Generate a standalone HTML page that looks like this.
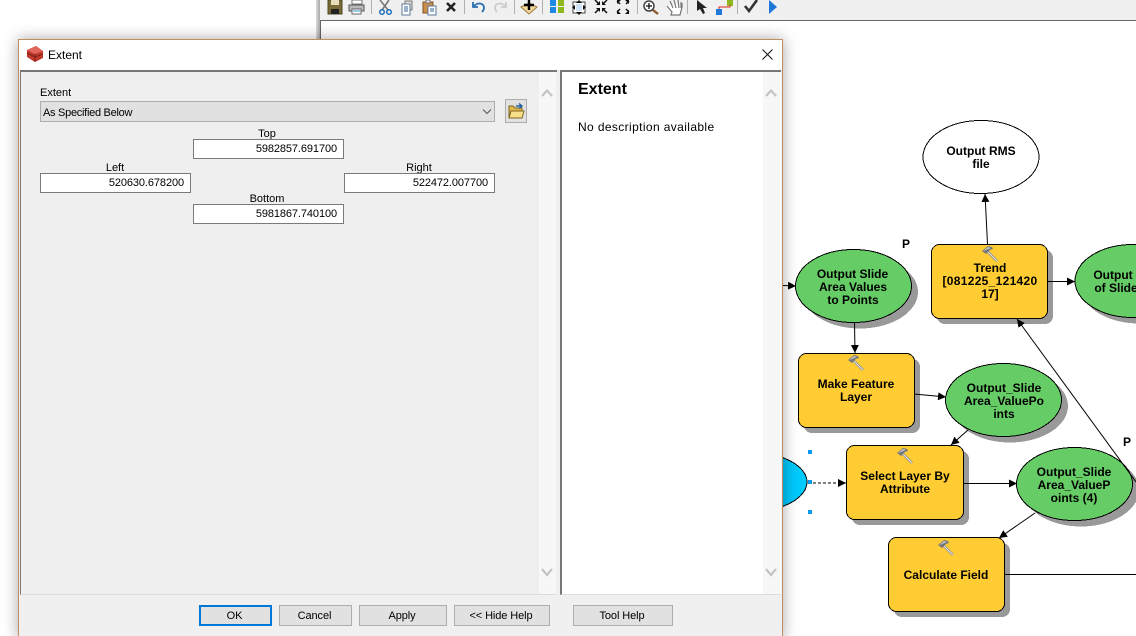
<!DOCTYPE html>
<html><head><meta charset="utf-8"><style>
html,body{margin:0;padding:0;background:#fff;width:1136px;height:636px;overflow:hidden}
body{position:relative;font-family:"Liberation Sans",sans-serif;font-size:11px;color:#000}
.a{position:absolute;box-sizing:border-box}
.t{position:absolute;white-space:nowrap;line-height:14px}
.c{transform:translateX(-50%)}
.in{position:absolute;box-sizing:border-box;background:#fff;border:1px solid #7a7a7a;height:20px;width:151px;text-align:right;padding-right:6px;line-height:18px;letter-spacing:-.1px}
.b{position:absolute;box-sizing:border-box;top:605px;height:21px;background:#e1e1e1;border:1px solid #adadad;text-align:center;line-height:20px;font-size:11px;padding-right:2px;letter-spacing:-.1px}
svg{position:absolute;left:0;top:0}
svg text{font-family:"Liberation Sans",sans-serif}
</style></head><body>
<div class="a" style="left:316px;top:0;width:4px;height:636px;background:linear-gradient(90deg,#ddd,#a8a8a8)"></div>
<div class="a" style="left:320px;top:0;width:816px;height:20px;background:#f0f0f0"></div>
<div class="a" style="left:320px;top:20px;width:816px;height:1px;background:#666"></div>
<div class="a" style="left:320px;top:20px;width:1px;height:616px;background:#666"></div>

<svg width="1136" height="636" viewBox="0 0 1136 636">
<defs>
<marker id="ah" viewBox="0 0 8 8" refX="8" refY="4" markerWidth="8" markerHeight="8" orient="auto" markerUnits="userSpaceOnUse"><path d="M0 0L8 4L0 8z" fill="#000"/></marker>
<g id="hm"><path d="M-3-3L7 7" stroke="#8a8a8a" stroke-width="2.600"/><path d="M-3-3L7 7" stroke="#e8e8e8" stroke-width="1"/><path d="M-8-3L-2-8L2-7L3-5L0-4L-4 0z" fill="#777"/><path d="M-7-3L-2-7L1-6L-4-4z" fill="#c4c4c4"/></g>
<linearGradient id="bl" x1="0" x2="1"><stop offset="0" stop-color="#00a8e0"/><stop offset="1" stop-color="#00ccff"/></linearGradient>
</defs>
<!-- toolbar icons -->
<g stroke="#b0b0b0" stroke-width="1"><path d="M371.500 0V14M464.500 0V14M514.500 0V14M542.500 0V14M637.500 0V14M687.500 0V14M737.500 0V14"/></g>
<g>
<path d="M328 0H342V14H328z" fill="#7a6a35" stroke="#4c4428"/><path d="M331 0H339V5H331z" fill="#e6dfb8"/><path d="M331 9H339V14H331z" fill="#222"/>
<path d="M352 0V4H362V0z" fill="#fff" stroke="#777"/><path d="M349 5H364V11H349z" fill="#bbb" stroke="#555"/><path d="M352 9H361V14H352z" fill="#fff" stroke="#666"/><path d="M353 11H360" stroke="#39c"/>
<path d="M380 0L388 10M389 0L382 10" stroke="#777" stroke-width="1.600"/><circle cx="382" cy="12" r="2.300" fill="none" stroke="#1f6fb5" stroke-width="1.500"/><circle cx="389" cy="12" r="2.300" fill="none" stroke="#1f6fb5" stroke-width="1.500"/>
<path d="M405 1H412V10H405z" fill="#ddd" stroke="#777"/><path d="M402 4H410V15H402z" fill="#fff" stroke="#5a7a9a"/><path d="M404 7H408M404 9H408M404 11H408" stroke="#369"/>
<path d="M423 2H433V13H423z" fill="#c98f4a" stroke="#7d5423"/><path d="M426 0H430V3H426z" fill="#eee" stroke="#777"/><path d="M428 6H436V15H428z" fill="#fff" stroke="#5a7a9a"/><path d="M430 9H434M430 11H434" stroke="#369"/>
<path d="M447 3L455 11M455 3L447 11" stroke="#222" stroke-width="2.600"/>
<path d="M473 2V7H478M474 6C478 2 484 3 484 8C484 10 483 11 482 12" fill="none" stroke="#2a6fb0" stroke-width="1.800"/>
<path d="M506 2V7H501M505 6C501 2 495 3 495 8C495 10 496 11 497 12" fill="none" stroke="#ccc" stroke-width="1.800"/>
<path d="M521 7L529 3L537 7L529 14z" fill="#f4d79a" stroke="#9a7a3a"/><path d="M529 0V10M524 5H534" stroke="#000" stroke-width="2.400"/>
<path d="M550 0H556V6H550zM550 7H556V13H550z" fill="#1e88e5"/><path d="M558 0H564V6H558zM558 7H564V13H558z" fill="#8fb71e"/>
<path d="M573 2H585V13H573z" fill="#fff" stroke="#444"/><path d="M576 4H582V11H576z" fill="#cfe3f5"/><path d="M579 0L582 3H576zM579 15L582 12H576zM572 7L575 5V10zM586 7L583 5V10z" fill="#111"/>
<path d="M595 0L599 4M607 0L603 4M595 13L599 9M607 13L603 9" stroke="#111" stroke-width="1.500"/><path d="M600 5V1L596 5zM602 5V1L606 5zM600 8V12L596 8zM602 8V12L606 8z" fill="#111"/>
<path d="M620 4L617 1M626 4L629 1M620 9L617 12M626 9L629 12" stroke="#111" stroke-width="1.500"/><path d="M617 0H621L617 4zM629 0H625L629 4zM617 14H621L617 10zM629 14H625L629 10z" fill="#111"/>
<circle cx="649" cy="6" r="5" fill="#fff" stroke="#444" stroke-width="1.500"/><path d="M646 6H652M649 3V9" stroke="#111" stroke-width="1.300"/><path d="M653 10L658 14" stroke="#8a5a2a" stroke-width="2.400"/>
<path d="M667 6L672 12L671 15H680L682 7V3M670 1L673 8M674 0L676 8M678 0L679 8M681 2L681 8" fill="#fff" stroke="#777" stroke-width="1.200"/>
<path d="M697 0L697 11L700 9L703 14L705 13L703 8L707 8z" fill="#222"/>
<path d="M716 9H722V15H716z" fill="#1e78d8"/><path d="M727 0H733V6H727z" fill="#8fb71e"/><path d="M719 9V7H730V5" fill="none" stroke="#d22"/>
<path d="M745 6L749 11L757 0" fill="none" stroke="#333" stroke-width="2.600"/>
<path d="M769 0V14L777 7z" fill="#1e78d8"/>
</g>
<!-- diagram -->
<g shape-rendering="crispEdges">
<ellipse cx="981" cy="157" rx="58" ry="36.500" fill="#fff" stroke="#000"/>
<g fill="#999">
<ellipse cx="860" cy="292" rx="58" ry="36.500"/><rect x="937" y="250" width="116" height="74" rx="8"/><ellipse cx="1139" cy="287" rx="58" ry="36.500"/>
<rect x="804" y="359" width="116" height="74" rx="8"/><ellipse cx="1010" cy="406" rx="58" ry="36.500"/>
<rect x="852" y="451" width="117" height="74" rx="8"/><ellipse cx="1081" cy="490" rx="58" ry="36.500"/><rect x="894" y="543" width="116" height="74" rx="8"/>
</g>
<ellipse cx="749" cy="482" rx="58" ry="30" fill="url(#bl)" stroke="#000"/>
<g fill="#66cc66" stroke="#000">
<ellipse cx="853.500" cy="286" rx="58" ry="36.500"/><ellipse cx="1133" cy="281" rx="58" ry="36.500"/><ellipse cx="1003.500" cy="400" rx="58" ry="36.500"/><ellipse cx="1074.500" cy="484" rx="58" ry="36.500"/>
</g>
<g fill="#ffcc33" stroke="#000">
<rect x="931.500" y="244.500" width="116" height="74" rx="8"/><rect x="798.500" y="353.500" width="116" height="74" rx="8"/><rect x="846.500" y="445.500" width="117" height="74" rx="8"/><rect x="888.500" y="537.500" width="116" height="74" rx="8"/>
</g>
</g>
<g stroke="#000" fill="none">
<path d="M987.500 244L985 194" marker-end="url(#ah)"/>
<path d="M854.500 322L855 353" marker-end="url(#ah)"/>
<path d="M783 285.500L796 286" marker-end="url(#ah)"/>
<path d="M1047 281.500H1075" marker-end="url(#ah)"/>
<path d="M914 394L946 397" marker-end="url(#ah)"/>
<path d="M968 430L951 445" marker-end="url(#ah)"/>
<path d="M963 483.500H1017" marker-end="url(#ah)"/>
<path d="M1035 513L999 538" marker-end="url(#ah)"/>
<path d="M1136 482L1017 319" marker-end="url(#ah)"/>
<path d="M808 483H846" stroke-dasharray="3 2" marker-end="url(#ah)"/>
</g>
<path d="M1004 574.500H1136" stroke="#000"/>
<g fill="#0a9bf0"><rect x="808" y="450" width="4" height="4"/><rect x="808" y="480" width="4" height="4"/><rect x="808" y="510" width="4" height="4"/></g>
<use href="#hm" x="990" y="254"/><use href="#hm" x="856" y="363"/><use href="#hm" x="905" y="456"/><use href="#hm" x="946" y="548"/>
<g font-size="12" font-weight="bold" text-anchor="middle" fill="#000">
<text x="981" y="155">Output RMS</text><text x="981" y="168">file</text>
<text x="852.500" y="278">Output Slide</text><text x="853" y="291">Area Values</text><text x="853" y="304">to Points</text>
<text x="990" y="272">Trend</text><text x="990" y="285" letter-spacing=".3">[081225_121420</text><text x="990" y="298">17]</text>
<text x="1113" y="279">Output</text><text x="1116" y="292">of Slide</text>
<text x="856" y="388">Make Feature</text><text x="856" y="401">Layer</text>
<text x="1004" y="392">Output_Slide</text><text x="1004" y="405">Area_ValuePo</text><text x="1004" y="418">ints</text>
<text x="905" y="480">Select Layer By</text><text x="905" y="493">Attribute</text>
<text x="1074" y="476">Output_Slide</text><text x="1074" y="489">Area_ValueP</text><text x="1074" y="502">oints (4)</text>
<text x="946" y="579">Calculate Field</text>
<text x="906" y="248">P</text><text x="1127" y="446">P</text>
</g>
</svg>

<!-- dialog -->
<div class="a" style="left:18px;top:39px;width:765px;height:600px;background:#f0f0f0;border:1px solid #bf8f62;box-shadow:0 0 14px rgba(0,0,0,.35)"></div>
<div class="a" style="left:19px;top:40px;width:763px;height:30px;background:#fff"></div>
<svg width="60" height="70" viewBox="0 0 60 70" style="left:0;top:0">
<path d="M27 50L36 46L43 51V58L35 62L27 57z" fill="#c0392b"/><path d="M27 50L36 46L43 51L35 54z" fill="#e0655a"/><path d="M27 53L35 57L43 54" fill="none" stroke="#7d1f16"/><path d="M35 54V62" stroke="#7d1f16"/>
</svg>
<div class="t" style="left:48px;top:48px;font-size:12px">Extent</div>
<svg width="1136" height="70" viewBox="0 0 1136 70"><path d="M762.500 49.500L772.500 59.500M772.500 49.500L762.500 59.500" stroke="#111" stroke-width="1"/></svg>

<div class="a" style="left:20px;top:70px;width:537px;height:525px;background:#efefef;border-top:2px solid #777;border-left:1px solid #777;border-bottom:1px solid #ddd"></div>
<div class="a" style="left:539px;top:72px;width:17px;height:522px;background:#f7f7f7"></div>
<div class="a" style="left:560px;top:70px;width:221px;height:525px;background:#fff;border-top:2px solid #777;border-left:2px solid #777;border-bottom:1px solid #ddd"></div>
<div class="a" style="left:763px;top:72px;width:17px;height:522px;background:#f7f7f7"></div>
<svg width="1136" height="636" viewBox="0 0 1136 636">
<g fill="none" stroke="#c4c4c4" stroke-width="2.200"><path d="M542 96L547 90.500L552 96M766 96L771 90.500L776 96M542 569L547 575L552 569M766 569L771 575L776 569"/></g>
</svg>

<div class="t" style="left:40px;top:86px">Extent</div>
<div class="a" style="left:40px;top:101px;width:455px;height:21px;background:#e1e1e1;border:1px solid #adadad"></div>
<div class="t" style="left:43px;top:106px;letter-spacing:-.28px">As Specified Below</div>
<svg width="1136" height="636" viewBox="0 0 1136 636"><path d="M483 109.500L487 113.500L491 109.500" fill="none" stroke="#555"/></svg>
<div class="a" style="left:505px;top:99px;width:22px;height:24px;background:#e1e1e1;border:1px solid #adadad"></div>
<svg width="1136" height="636" viewBox="0 0 1136 636">
<path d="M509 106H513L515 108H522V118H509z" fill="#e0b94a" stroke="#7d6420"/><path d="M509 118L511 111H524L522 118z" fill="#f8e08a" stroke="#7d6420"/><path d="M516 106H521M519 103.500L522 106L519 108.500" fill="none" stroke="#1f5f9f" stroke-width="1.400"/>
</svg>
<div class="t c" style="left:267px;top:127px">Top</div>
<div class="in" style="left:193px;top:139px">5982857.691700</div>
<div class="t c" style="left:115px;top:161px">Left</div>
<div class="in" style="left:40px;top:173px">520630.678200</div>
<div class="t c" style="left:419px;top:161px">Right</div>
<div class="in" style="left:344px;top:173px">522472.007700</div>
<div class="t c" style="left:267px;top:192px">Bottom</div>
<div class="in" style="left:193px;top:204px">5981867.740100</div>

<div class="t" style="left:578px;top:83px;font-size:16px;font-weight:bold">Extent</div>
<div class="t" style="left:578px;top:120px;font-size:12px;letter-spacing:.38px">No description available</div>

<div class="b" style="left:199px;width:73px;border:2px solid #0078d7;line-height:19px">OK</div>
<div class="b" style="left:279px;width:73px">Cancel</div>
<div class="b" style="left:359px;width:88px">Apply</div>
<div class="b" style="left:454px;width:96px">&lt;&lt; Hide Help</div>
<div class="b" style="left:573px;width:100px">Tool Help</div>
</body></html>
